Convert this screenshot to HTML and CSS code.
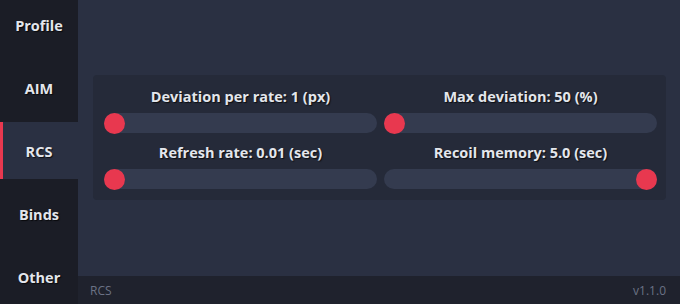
FILE: index.html
```html
<!DOCTYPE html>
<html>
<head>
  <title>RCS</title>
  <link rel="stylesheet" href="styles.css">
</head>
<body>
  <div class="sidebar">
    <div class="nav-item">Profile</div>
    <div class="nav-item">AIM</div>
    <div class="nav-item active">RCS</div>
    <div class="nav-item">Binds</div>
    <div class="nav-item">Other</div>
  </div>
  <div class="main">
    <div class="content">
      <div class="panel">
        <div class="setting">
          <div class="label">Deviation per rate: 1 (px)</div>
          <div class="track"><div class="thumb" style="left: 0%;"></div></div>
        </div>
        <div class="setting">
          <div class="label">Max deviation: 50 (%)</div>
          <div class="track"><div class="thumb" style="left: 0%;"></div></div>
        </div>
        <div class="setting">
          <div class="label">Refresh rate: 0.01 (sec)</div>
          <div class="track"><div class="thumb" style="left: 0%;"></div></div>
        </div>
        <div class="setting">
          <div class="label">Recoil memory: 5.0 (sec)</div>
          <div class="track"><div class="thumb" style="left: calc(100% - 21px);"></div></div>
        </div>
      </div>
    </div>
    <div class="footer">
      <span>RCS</span>
      <span>v1.1.0</span>
    </div>
  </div>
</body>
</html>
```

FILE: styles.css
```css
body {
  font-family: 'Open Sans', 'Noto Sans', sans-serif;
  background-color: #2a3042;
  color: #e3e6ec;
  margin: 0;
  display: flex;
  height: 100vh;
  overflow: hidden;
}

.sidebar {
  width: 78px;
  background-color: #1b1d26;
  display: flex;
  flex-direction: column;
  justify-content: center;
  gap: 6px;
  overflow: hidden;
}

.nav-item {
  flex: 0 0 57px;
  display: flex;
  justify-content: center;
  align-items: center;
  font-size: 14.5px;
  font-weight: bold;
  padding-top: 2px;
  box-sizing: border-box;
  text-shadow: 1px 1px 1px rgba(0, 0, 0, 0.7);
}

.nav-item:first-child {
  margin-top: -3px;
}

.nav-item.active {
  background-color: #2a3042;
  border-left: 3px solid #e8384f;
  padding-right: 3px;
}

.main {
  flex: 1;
  display: flex;
  flex-direction: column;
}

.content {
  flex: 1;
  padding: 75px 14px 0 15px;
}

.panel {
  background-color: #252a39;
  border-radius: 4px;
  padding: 11px 9px 11px 11px;
  display: grid;
  grid-template-columns: 1fr 1fr;
  column-gap: 7px;
  row-gap: 9px;
}

.label {
  text-align: center;
  font-size: 14.5px;
  font-weight: bold;
  line-height: 21px;
  margin-bottom: 6px;
  text-shadow: 1px 1px 1px rgba(0, 0, 0, 0.7);
}

.track {
  position: relative;
  height: 20px;
  border-radius: 10px;
  background-color: #343b4f;
}

.thumb {
  position: absolute;
  top: -0.5px;
  width: 21px;
  height: 21px;
  border-radius: 50%;
  background-color: #e8384f;
}

.footer {
  height: 28px;
  background-color: #1f222d;
  display: flex;
  justify-content: space-between;
  align-items: center;
  padding: 0 14px 0 12px;
  font-size: 12px;
  color: #6b7285;
}
```
